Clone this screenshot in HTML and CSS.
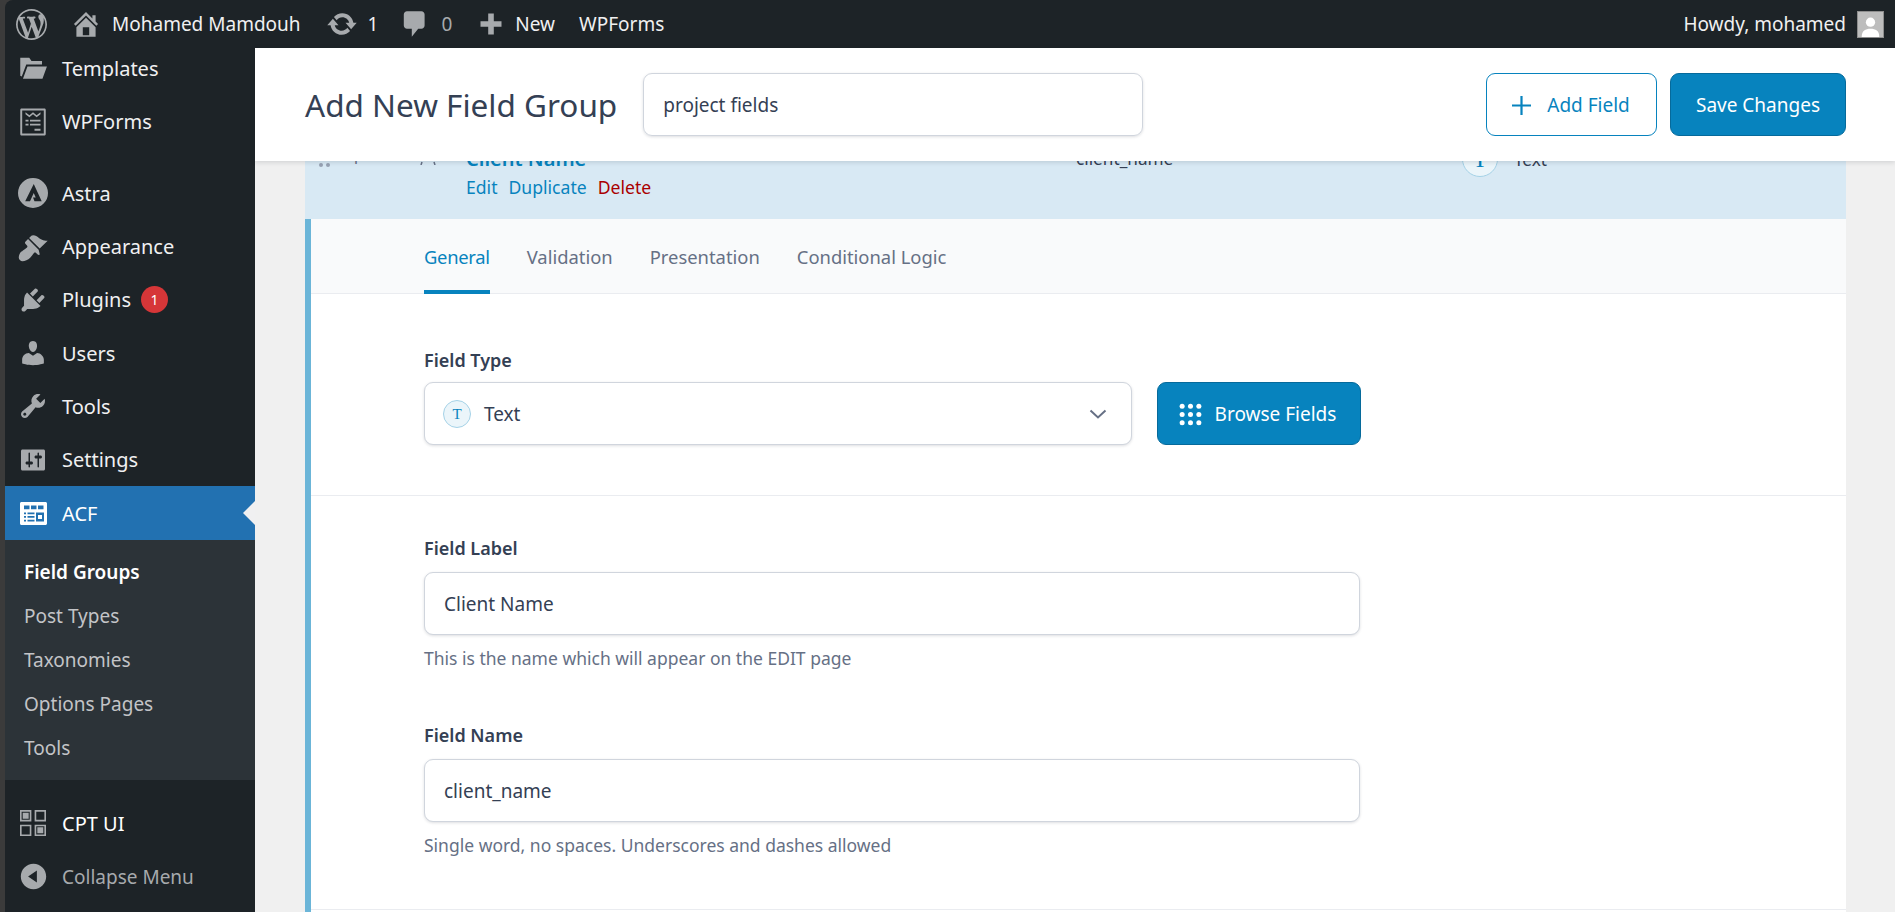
FILE: index.html
```html
<!DOCTYPE html>
<html lang="en">
<head>
<meta charset="utf-8">
<title>Add New Field Group</title>
<link rel="stylesheet" href="styles.css">
</head>
<body>
<div class="shell">
  <header class="adminbar">
    <div class="ab-group">
      <svg class="ab-wp" viewBox="0 0 20 20"><path d="M20 10c0-5.51-4.49-10-10-10C4.48 0 0 4.49 0 10c0 5.52 4.48 10 10 10 5.51 0 10-4.48 10-10zM7.78 15.37L4.37 6.22c.55-.02 1.17-.08 1.17-.08.5-.06.44-1.13-.06-1.11 0 0-1.45.11-2.37.11-.18 0-.37 0-.58-.01C4.12 2.69 6.87 1.11 10 1.11c2.33 0 4.45.87 6.05 2.34-.68-.11-1.65.39-1.65 1.58 0 .74.45 1.36.9 2.1.35.61.55 1.36.55 2.46 0 1.49-1.4 5-1.4 5l-3.03-8.37c.54-.02.82-.17.82-.17.5-.05.44-1.25-.06-1.22 0 0-1.44.12-2.38.12-.87 0-2.33-.12-2.33-.12-.5-.03-.56 1.2-.06 1.22l.92.08 1.26 3.41zM17.41 10c.24-.64.74-1.87.43-4.25.7 1.29 1.05 2.71 1.05 4.25 0 3.29-1.73 6.24-4.4 7.78.97-2.59 1.94-5.2 2.92-7.78zM6.1 18.09C3.12 16.65 1.11 13.53 1.11 10c0-1.3.23-2.48.72-3.59C3.25 10.3 4.67 14.2 6.1 18.09zm4.03-6.63l2.58 6.98c-.86.29-1.76.45-2.71.45-.79 0-1.57-.11-2.29-.33.81-2.38 1.62-4.74 2.42-7.1z"/></svg>
      <svg class="ab-icon ab-home" viewBox="0 0 20 20"><path d="M16 8.5l1.53 1.53-1.06 1.06L10 4.62l-6.47 6.47-1.06-1.06L10 2.5l4 4v-2h2v4zm-6-2.46l6 5.99V18H4v-5.97zM12 17v-5H8v5h4z"/></svg>
      <span class="ab-text ab-site">Mohamed Mamdouh</span>
      <svg class="ab-icon ab-update" viewBox="0 0 20 20"><path d="M10.2 3.28c3.53 0 6.43 2.61 6.92 6h2.08l-3.5 4-3.5-4h2.32c-.45-1.97-2.21-3.45-4.32-3.45-1.45 0-2.73.71-3.54 1.78L4.95 5.66C6.23 4.2 8.11 3.28 10.2 3.28zm-.4 13.44c-3.52 0-6.43-2.61-6.92-6H.8l3.5-4c1.17 1.33 2.33 2.67 3.5 4H5.48c.45 1.97 2.21 3.45 4.32 3.45 1.45 0 2.73-.71 3.54-1.78l1.71 1.95c-1.28 1.46-3.15 2.38-5.25 2.38z"/></svg>
      <span class="ab-text ab-count">1</span>
      <svg class="ab-icon ab-comment" viewBox="0 0 20 20"><path d="M5 2h9c1.1 0 2 .9 2 2v7c0 1.1-.9 2-2 2h-2l-4 5v-5H5c-1.1 0-2-.9-2-2V4c0-1.100.9-2 2-2z"/></svg>
      <span class="ab-text ab-muted">0</span>
      <svg class="ab-icon ab-plus" viewBox="0 0 20 20"><path d="M17.500 8v4H12v5.500H8V12H2.500V8H8V2.500h4V8z"/></svg>
      <span class="ab-text ab-new">New</span>
      <span class="ab-text">WPForms</span>
    </div>
    <div class="ab-group">
      <span class="ab-text">Howdy, mohamed</span>
      <span class="avatar">
        <svg viewBox="0 0 27 27"><circle cx="13.500" cy="11" r="5"/><path d="M4 27c0-7 4-9 9.500-9s9.500 2 9.500 9z"/></svg>
      </span>
    </div>
  </header>

  <div class="workspace">
    <nav class="sidebar">
      <ul class="menu">
        <li class="menu-item">
          <svg class="mi" viewBox="0 0 20 20"><path d="M1.500 2.500h6l1.500 2.200h7v2.300H5.500L2.500 15 1.500 14.500zM6.300 8.300H19.300L16.300 16.500H3.300z"/></svg>
          <span>Templates</span>
        </li>
        <li class="menu-item menu-gap">
          <svg class="mi" viewBox="0 0 20 20"><path fill-rule="evenodd" d="M2.500 1h15c.8 0 1 .4 1 1v16c0 .6-.2 1-1 1h-15c-.8 0-1-.4-1-1V2c0-.6.2-1 1-1zm.3 1.300v15.400h14.400V2.300zM5 3.500l2.600 2 2.400-2 2.400 2 2.600-2v1.300l-2.600 2-2.400-2-2.400 2-2.600-2zM5 8.500h2v1.200H5zm3 0h7v1.200H8zM5 11.200h2v1.200H5zm3 0h7v1.200H8zM11 14.500h4v1.300h-4z"/></svg>
          <span>WPForms</span>
        </li>
        <li class="menu-item">
          <svg class="mi mi-astra" viewBox="0 0 20 20"><path fill-rule="evenodd" d="M10 0a10 10 0 1 1 0 20 10 10 0 0 1 0-20zM10.500 4 4.800 15.500h3.200l2.500-5.500 1.300 3h-1.800l1 2.500h4.800z"/></svg>
          <span>Astra</span>
        </li>
        <li class="menu-item">
          <svg class="mi" viewBox="0 0 20 20"><path d="M14.480 11.060L7.410 3.990l1.500-1.500c.5-.56 2.300-.47 3.510.32 1.210.8 1.430 1.280 2.910 2.100 1.180.64 2.450 1.260 4.450.85zm-.71.71L6.700 4.700 4.930 6.470c-.39.39-.39 1.020 0 1.410l1.060 1.060c.39.39.39 1.030 0 1.420-.6.6-1.430 1.110-2.210 1.690-.35.26-.7.53-1.010.84C1.430 13.230.5 15.500.5 17c0 1.300 1.200 2.500 2.500 2.500 1.500 0 3.770-.93 5.110-2.270.31-.31.58-.66.84-1.010.58-.78 1.090-1.610 1.690-2.210.39-.39 1.030-.39 1.420 0l1.060 1.060c.39.39 1.020.39 1.410 0z"/></svg>
          <span>Appearance</span>
        </li>
        <li class="menu-item">
          <svg class="mi" viewBox="0 0 20 20"><path d="M13.110 4.360L9.870 7.600 8 5.730l3.240-3.240c.35-.34 1.050-.2 1.560.32.52.51.66 1.210.31 1.550zm-8 1.770l.91-1.120 9.010 9.010-1.190.84c-.71.71-2.630 1.160-3.820 1.160H6.140L4.900 17.260c-.59.59-1.540.59-2.120 0-.59-.58-.59-1.530 0-2.120l1.240-1.240v-3.880c0-1.130.4-3.190 1.090-3.890zm7.260 3.970l3.240-3.240c.34-.35 1.040-.21 1.550.31.52.51.66 1.210.31 1.550l-3.240 3.250z"/></svg>
          <span>Plugins</span>
          <span class="badge">1</span>
        </li>
        <li class="menu-item">
          <svg class="mi" viewBox="0 0 20 20"><path d="M10 9.250c-2.270 0-2.730-3.440-2.730-3.440C7 4.020 7.820 2 9.970 2c2.160 0 2.980 2.020 2.710 3.810 0 0-.41 3.440-2.680 3.440zm0 2.570L12.720 10c2.390 0 4.520 2.330 4.520 4.530v2.490s-3.650 1.130-7.240 1.130c-3.650 0-7.240-1.130-7.240-1.130v-2.490c0-2.250 1.940-4.480 4.470-4.480z"/></svg>
          <span>Users</span>
        </li>
        <li class="menu-item">
          <svg class="mi" viewBox="0 0 20 20"><path d="M16.680 9.770c-1.340 1.340-3.300 1.670-4.950.99l-5.410 6.520c-.99.99-2.590.99-3.580 0s-.99-2.590 0-3.570l6.520-5.420c-.68-1.650-.35-3.610.99-4.950 1.280-1.280 3.120-1.620 4.720-1.060l-2.890 2.890 2.820 2.820 2.860-2.870c.53 1.580.18 3.390-1.080 4.670zM3.810 16.210c.4.390 1.040.39 1.430 0 .4-.4.4-1.040 0-1.430-.39-.4-1.030-.4-1.430 0-.39.39-.39 1.030 0 1.430z"/></svg>
          <span>Tools</span>
        </li>
        <li class="menu-item">
          <svg class="mi" viewBox="0 0 20 20"><path fill-rule="evenodd" d="M18 16V4c0-.55-.45-1-1-1H3c-.55 0-1 .45-1 1v12c0 .55.45 1 1 1h14c.55 0 1-.45 1-1zM8 11h1c.55 0 1 .45 1 1s-.45 1-1 1H8v1.500c0 .28-.22.5-.5.5s-.5-.22-.5-.5V13H6c-.55 0-1-.45-1-1s.45-1 1-1h1V5.500c0-.28.22-.5.5-.5s.5.22.5.5V11zm5-2h-1c-.55 0-1-.45-1-1s.45-1 1-1h1V5.500c0-.28.22-.5.5-.5s.5.22.5.5V7h1c.55 0 1 .45 1 1s-.45 1-1 1h-1v5.500c0 .28-.22.5-.5.5s-.5-.22-.5-.5V9z"/></svg>
          <span>Settings</span>
        </li>
        <li class="menu-item menu-active">
          <svg class="mi" viewBox="0 0 27 23"><path fill-rule="evenodd" d="M1.500 0h24c.8 0 1.500.7 1.500 1.500v20c0 .8-.7 1.500-1.500 1.500h-24C.7 23 0 22.300 0 21.500v-20C0 .7.700 0 1.500 0zM4 3.500v3.800h5.500V3.500zm7 0v3.800h5.500V3.500zm7 0v3.800h5.500V3.500zM4 10.500v1.800h2v-1.800zm3.500 0v1.800h7v-1.800zm8.500 0v9h8v-9zM4 14v1.800h2V14zm3.500 0v1.800h7V14zM4 17.700v1.800h2v-1.800zm3.500 0v1.800h7v-1.800zM18 13h4v4h-4z"/></svg>
          <span>ACF</span>
        </li>
        <li>
          <ul class="submenu">
            <li class="sub-current">Field Groups</li>
            <li>Post Types</li>
            <li>Taxonomies</li>
            <li>Options Pages</li>
            <li>Tools</li>
          </ul>
        </li>
        <li class="menu-item menu-cpt">
          <svg class="mi" viewBox="0 0 24 24"><path fill-rule="evenodd" d="M0 0h10.500v10.500H0zm1.500 1.500v7.500h7.500V1.500zM13.500 0H24v10.500H13.500zm1.500 1.500v7.500h7.500V1.500zM0 13.500h10.500V24H0zm1.500 1.500v7.500h7.500V15zM13.500 13.500H24V24H13.500zm1.500 1.500v7.500h7.500V15z"/><path d="M2.500 2.500h5.500V8H2.500zM16 16h5.500v5.500H16z"/></svg>
          <span>CPT UI</span>
        </li>
        <li class="menu-item menu-collapse">
          <svg class="mi" viewBox="0 0 20 20"><path fill-rule="evenodd" d="M10 .6c5.190 0 9.400 4.210 9.400 9.400s-4.210 9.400-9.400 9.400S.6 15.190.6 10 4.810.6 10 .6zM12.500 14.500v-9L6 10z"/></svg>
          <span>Collapse Menu</span>
        </li>
      </ul>
    </nav>

    <main class="main">
      <div class="page-head">
        <h1 class="page-title">Add New Field Group</h1>
        <div class="title-input">project fields</div>
        <div class="head-actions">
          <button class="btn btn-outline">
            <svg class="btn-plus" viewBox="0 0 21 21"><path d="M10.500 1v19M1 10.500h19"/></svg>
            Add Field
          </button>
          <button class="btn btn-primary btn-save">Save Changes</button>
        </div>
      </div>

      <div class="content">
        <section class="card">
          <div class="field-row">
            <div class="field-row-inner">
              <div class="col-handle">
                <svg class="handle" viewBox="0 0 11 16"><circle cx="2" cy="2" r="2"/><circle cx="9" cy="2" r="2"/><circle cx="2" cy="9" r="2"/><circle cx="9" cy="9" r="2"/></svg>
                <span class="order">1</span>
                <svg class="ticks" viewBox="0 0 16 18"><path d="M1 18l1-3M15 18l-1-3"/></svg>
              </div>
              <div class="col-label">
                <div class="row-title">Client Name</div>
                <div class="row-actions"><span>Edit</span><span>Duplicate</span><span class="danger">Delete</span></div>
              </div>
              <div class="col-name">client_name</div>
              <div class="col-type"><span class="type-circle type-circle-lg">T</span><span>Text</span></div>
            </div>
          </div>

          <div class="field-settings">
            <div class="tabs">
              <span class="tab tab-active">General</span>
              <span class="tab">Validation</span>
              <span class="tab">Presentation</span>
              <span class="tab">Conditional Logic</span>
            </div>

            <div class="section section-type">
              <div class="label">Field Type</div>
              <div class="type-row">
                <div class="control select">
                  <span class="type-circle">T</span>
                  <span class="select-value">Text</span>
                  <svg class="chevron" viewBox="0 0 18 10"><path d="M1.500 1.500 9 8.500l7.500-7"/></svg>
                </div>
                <button class="btn btn-primary btn-browse">
                  <svg class="dots" viewBox="0 0 22 22"><circle cx="3" cy="3" r="2.400"/><circle cx="11" cy="3" r="2.400"/><circle cx="19" cy="3" r="2.400"/><circle cx="3" cy="11" r="2.400"/><circle cx="11" cy="11" r="2.400"/><circle cx="19" cy="11" r="2.400"/><circle cx="3" cy="19" r="2.400"/><circle cx="11" cy="19" r="2.400"/><circle cx="19" cy="19" r="2.400"/></svg>
                  Browse Fields
                </button>
              </div>
            </div>

            <div class="section section-fields">
              <div class="field">
                <div class="label">Field Label</div>
                <div class="control text-input">Client Name</div>
                <div class="help">This is the name which will appear on the EDIT page</div>
              </div>
              <div class="field">
                <div class="label">Field Name</div>
                <div class="control text-input">client_name</div>
                <div class="help">Single word, no spaces. Underscores and dashes allowed</div>
              </div>
            </div>
            <div class="section-rest"></div>
          </div>
        </section>
      </div>
    </main>
  </div>
</div>
</body>
</html>
```
FILE: styles.css
```css
* { box-sizing: border-box; }
html, body { height: 100%; }
body {
  margin: 0;
  height: 100vh;
  overflow: hidden;
  background: #3b3b3b;
  padding-left: 5px;
  font-family: "Noto Sans", "Open Sans", sans-serif;
  color: #344054;
}
ul { list-style: none; margin: 0; padding: 0; }
button { font: inherit; }

.shell { height: 100%; display: flex; flex-direction: column; overflow: hidden; border-top-left-radius: 8px; }

/* admin bar */
.adminbar {
  flex: 0 0 48px;
  background: #1d2327;
  color: #f0f0f1;
  display: flex;
  justify-content: space-between;
  align-items: center;
  padding: 0 11px 0 11px;
  font-size: 19px;
}
.ab-group { display: flex; align-items: center; }
.ab-wp { width: 31px; height: 31px; fill: #a7aaad; }
.ab-icon { fill: #a7aaad; flex: none; width: 32px; height: 32px; }
.ab-home { margin-left: 23px; }
.ab-site { margin-left: 10px; }
.ab-update { margin-left: 25px; }
.ab-count { margin-left: 10px; }
.ab-comment { margin-left: 21px; }
.ab-muted { margin-left: 10px; color: #a7aaad; }
.ab-plus { width: 28px; height: 28px; margin-left: 25px; }
.ab-new { margin-left: 10px; margin-right: 24px; }
.ab-text { white-space: nowrap; }
.avatar { width: 27px; height: 27px; margin-left: 11px; background: #bdbdbd; border: 1px solid #8e8e8e; display: block; overflow: hidden; }
.avatar svg { display: block; width: 100%; height: 100%; fill: #fff; }

/* layout */
.workspace { flex: 1; min-height: 0; display: flex; }

/* sidebar */
.sidebar { flex: 0 0 250px; background: #1d2327; overflow: hidden; color: #f0f0f1; font-size: 20px; }
.menu { margin-top: -6px; }
.menu-item { height: 53.300px; display: flex; align-items: center; padding-left: 13px; }
.mi { width: 30px; height: 30px; fill: #a7aaad; flex: none; margin-right: 14px; }
.menu-gap { margin-bottom: 18px; }
.menu-active { background: #2271b1; color: #fff; position: relative; }
.menu-active .mi { fill: #fff; width: 27px; height: 23px; margin-left: 2px; margin-right: 15px; }
.menu-active::after {
  content: "";
  position: absolute;
  right: 0;
  top: 50%;
  margin-top: -12px;
  border: 12px solid transparent;
  border-left-width: 0;
  border-right-color: #f0f0f1;
}
.badge {
  width: 27px; height: 27px; border-radius: 50%;
  background: #d63638; color: #fff;
  font-size: 14px; line-height: 27px; text-align: center;
  margin-left: 10px;
}
.submenu { background: #2c3338; padding: 10px 0 10px 19px; color: #c3c4c7; font-size: 19px; }
.submenu li { height: 44px; line-height: 44px; }
.sub-current { color: #fff; font-weight: 600; }
.menu-cpt { margin-top: 17px; color: #fff; }
.menu-cpt .mi { width: 26px; height: 26px; margin-left: 2px; margin-right: 16px; }
.menu-collapse { color: #a7aaad; font-size: 19px; }
.menu-collapse .mi { width: 27px; height: 27px; margin-left: 2px; margin-right: 15px; }

/* main */
.main { flex: 1; min-width: 0; background: #f0f0f0; display: flex; flex-direction: column; }
.page-head {
  flex: 0 0 113px;
  background: #fff;
  display: flex;
  align-items: center;
  padding: 0 49px 0 50px;
  position: relative;
  z-index: 2;
  box-shadow: 0 1px 5px rgba(16, 24, 40, .16);
}
.page-title { margin: 0; font-size: 31.500px; font-weight: 400; color: #344054; white-space: nowrap; }
.title-input {
  margin-left: 26px;
  width: 500px; height: 63px;
  border: 1px solid #d0d5dd; border-radius: 9px;
  box-shadow: 0 1px 3px rgba(16, 24, 40, .14);
  padding: 1px 0 0 19px;
  display: flex; align-items: center;
  font-size: 19px; color: #344054;
}
.head-actions { margin-left: auto; display: flex; gap: 13px; }
.btn {
  height: 63px; border-radius: 9px; cursor: pointer;
  display: flex; align-items: center; justify-content: center;
  font-size: 19px; padding: 1px 0 0;
}
.btn-outline { width: 171px; background: #fff; border: 1px solid #0783be; color: #0783be; gap: 15px; padding-right: 2px; }
.btn-plus { width: 21px; height: 21px; fill: none; stroke: #0783be; stroke-width: 2.200; }
.btn-primary { background: #0783be; border: 1px solid #066a9b; color: #fff; }
.btn-save { width: 176px; }

.content { flex: 1; min-height: 0; overflow: hidden; padding: 0 49px 0 50px; }
.card { background: #fff; }

.field-row { height: 58px; background: #d8e9f4; overflow: hidden; }
.field-row-inner { margin-top: -14px; display: flex; align-items: flex-start; height: 72px; }
.col-handle { width: 161px; padding: 0 0 0 14px; display: flex; align-items: flex-start; font-size: 16px; color: #667085; flex: none; }
.handle { width: 11px; height: 16px; fill: #98a2b3; margin-top: 9px; flex: none; }
.order { margin-left: 21px; }
.ticks { width: 16px; height: 18px; margin-left: 60px; fill: none; stroke: #667085; stroke-width: 1.500; flex: none; }
.col-label { width: 610px; flex: none; }
.row-title { color: #0783be; font-size: 20px; font-weight: 600; line-height: 24px; }
.row-actions { display: flex; gap: 11px; color: #0783be; font-size: 17.600px; line-height: 22px; margin-top: 5px; }
.danger { color: #a00; }
.col-name { width: 386px; flex: none; font-size: 17.200px; line-height: 24px; }
.col-type { display: flex; align-items: center; gap: 16px; font-size: 17.200px; margin-top: -6px; }

.type-circle {
  width: 28px; height: 28px; flex: none; border-radius: 50%;
  background: #ebf5fa; border: 1px solid #a5d2e7;
  color: #0783be;
  display: flex; align-items: center; justify-content: center;
  font-family: "Liberation Serif", serif; font-size: 15px;
}
.type-circle-lg { width: 36px; height: 36px; font-size: 24px; }

.field-settings { border-left: 6px solid #6bb5d8; }
.tabs {
  height: 75px;
  background: #f9fafb;
  border-bottom: 1px solid #eaecf0;
  padding-left: 113px;
  display: flex;
  gap: 37px;
}
.tab {
  font-size: 18.400px; color: #667085;
  line-height: 75px; height: 75px;
  margin-bottom: -1px;
}
.tab-active { color: #0783be; border-bottom: 4px solid #0783be; letter-spacing: -.3px; }

.section { padding: 0 167px 0 113px; }
.section-type { height: 202px; padding-top: 54px; border-bottom: 1px solid #eaecf0; }
.section-fields { padding-top: 40px; padding-bottom: 53px; border-bottom: 1px solid #eaecf0; }
.section-rest { height: 40px; }

.label { font-size: 18px; font-weight: 600; line-height: 24px; color: #344054; }
.type-row { display: flex; gap: 25px; margin-top: 10px; }
.control {
  height: 63px; background: #fff;
  border: 1px solid #d0d5dd; border-radius: 9px;
  box-shadow: 0 1px 3px rgba(16, 24, 40, .14);
  display: flex; align-items: center;
  font-size: 19px; color: #344054;
}
.select { width: 708px; padding: 1px 18px 0; }
.select-value { margin-left: 13px; }
.chevron { width: 18px; height: 10px; margin-left: auto; fill: none; stroke: #667085; stroke-width: 2; margin-right: 6px; }
.btn-browse { width: 204px; gap: 13px; padding-right: 3px; }
.dots { width: 23px; height: 23px; fill: #fff; flex: none; }

.field + .field { margin-top: 54px; }
.text-input { width: 936px; padding-left: 19px; margin-top: 12px; }
.help { font-size: 17.500px; color: #667085; line-height: 22px; margin-top: 12px; }
```
